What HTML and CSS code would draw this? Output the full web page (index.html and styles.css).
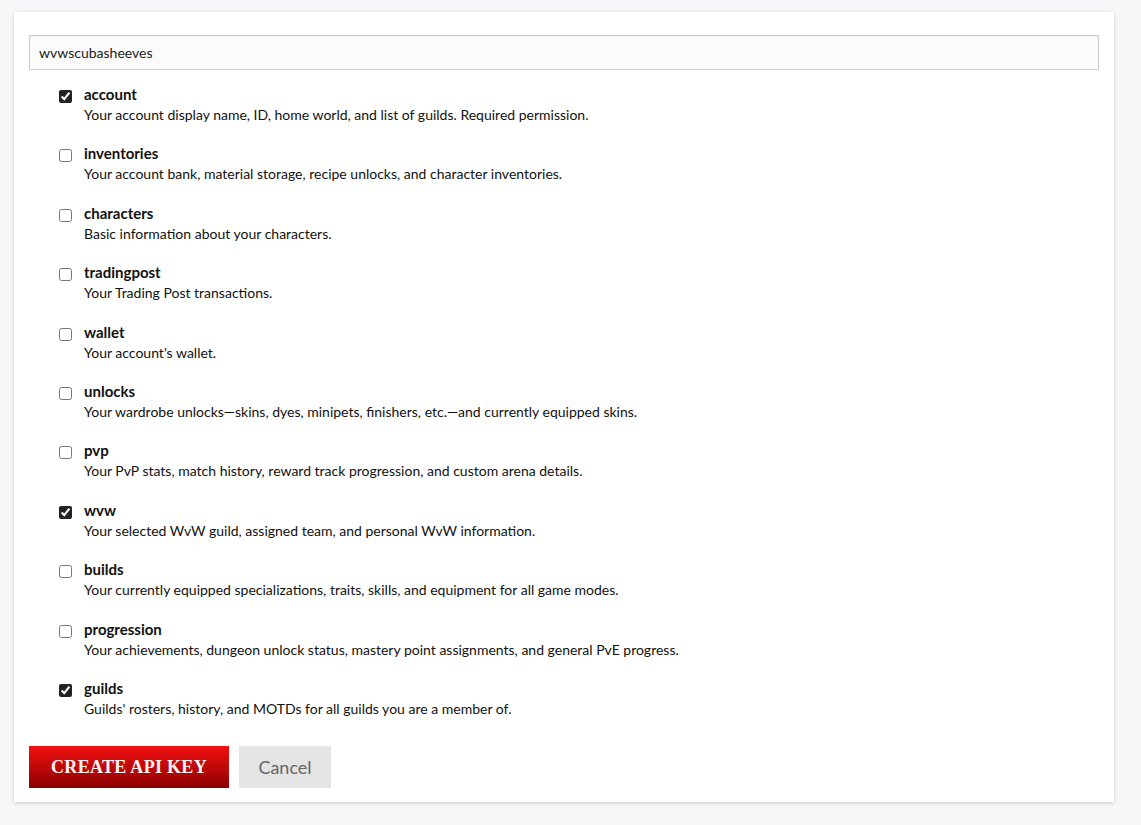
FILE: index.html
```html
<!DOCTYPE html>
<html lang="en">
<head>
<meta charset="UTF-8" />
<title>New API Key</title>
<link rel="stylesheet" href="styles.css">
</head>
<body>
<form class="card">
  <input class="key-name" type="text" value="wvwscubasheeves">

  <ul class="perms">
    <li><input type="checkbox" checked><div><b>account</b><p>Your account display name, ID, home world, and list of guilds. Required permission.</p></div></li>
    <li><input type="checkbox"><div><b>inventories</b><p>Your account bank, material storage, recipe unlocks, and character inventories.</p></div></li>
    <li><input type="checkbox"><div><b>characters</b><p>Basic information about your characters.</p></div></li>
    <li><input type="checkbox"><div><b>tradingpost</b><p>Your Trading Post transactions.</p></div></li>
    <li><input type="checkbox"><div><b>wallet</b><p>Your account's wallet.</p></div></li>
    <li><input type="checkbox"><div><b>unlocks</b><p>Your wardrobe unlocks—skins, dyes, minipets, finishers, etc.—and currently equipped skins.</p></div></li>
    <li><input type="checkbox"><div><b>pvp</b><p>Your PvP stats, match history, reward track progression, and custom arena details.</p></div></li>
    <li><input type="checkbox" checked><div><b>wvw</b><p>Your selected WvW guild, assigned team, and personal WvW information.</p></div></li>
    <li><input type="checkbox"><div><b>builds</b><p>Your currently equipped specializations, traits, skills, and equipment for all game modes.</p></div></li>
    <li><input type="checkbox"><div><b>progression</b><p>Your achievements, dungeon unlock status, mastery point assignments, and general PvE progress.</p></div></li>
    <li><input type="checkbox" checked><div><b>guilds</b><p>Guilds' rosters, history, and MOTDs for all guilds you are a member of.</p></div></li>
  </ul>

  <div class="actions">
    <button type="button" class="btn-create">Create API Key</button>
    <button type="button" class="btn-cancel">Cancel</button>
  </div>
</form>
</body>
</html>
```

FILE: styles.css
```css
body {
  margin: 0;
  padding: 12px 27px 23px 14px;
  background: #f6f7f9;
  font-family: Lato, "Liberation Sans", sans-serif;
  color: #111;
}
.card {
  background: white;
  box-shadow: 0 1px 4px rgba(0,0,0,0.18);
  padding: 23px 15px 14px 15px;
}
.key-name {
  display: block;
  width: 100%;
  box-sizing: border-box;
  height: 35px;
  border: 1px solid #cccccc;
  background: #fbfbfb;
  padding: 0 9px;
  font-family: inherit;
  font-size: 14px;
  color: #222;
  box-shadow: inset 0 1px 2px rgba(0,0,0,0.06);
}
.perms {
  list-style: none;
  margin: 15px 0 0 0;
  padding: 0 0 0 30px;
}
.perms li {
  display: flex;
  align-items: flex-start;
  height: 59.4px;
}
.perms input {
  width: 13px;
  height: 13px;
  margin: 5px 12px 0 0;
  accent-color: #222;
}
.perms b {
  display: block;
  font-size: 15px;
  line-height: 18px;
}
.perms p {
  margin: 3px 0 0 0;
  font-size: 14px;
  line-height: 18px;
}
.actions {
  display: flex;
  gap: 10px;
  margin-top: 8px;
}
.actions button {
  height: 42px;
  border: none;
  cursor: pointer;
}
.btn-create {
  width: 200px;
  background: linear-gradient(#f21010, #8a0000);
  color: #fdf3f3;
  font-family: "Liberation Serif", serif;
  font-size: 18px;
  font-weight: bold;
  text-transform: uppercase;
  letter-spacing: 0.3px;
}
.btn-cancel {
  width: 92px;
  background: #e4e4e4;
  color: #666;
  font-family: inherit;
  font-size: 18px;
}
```
